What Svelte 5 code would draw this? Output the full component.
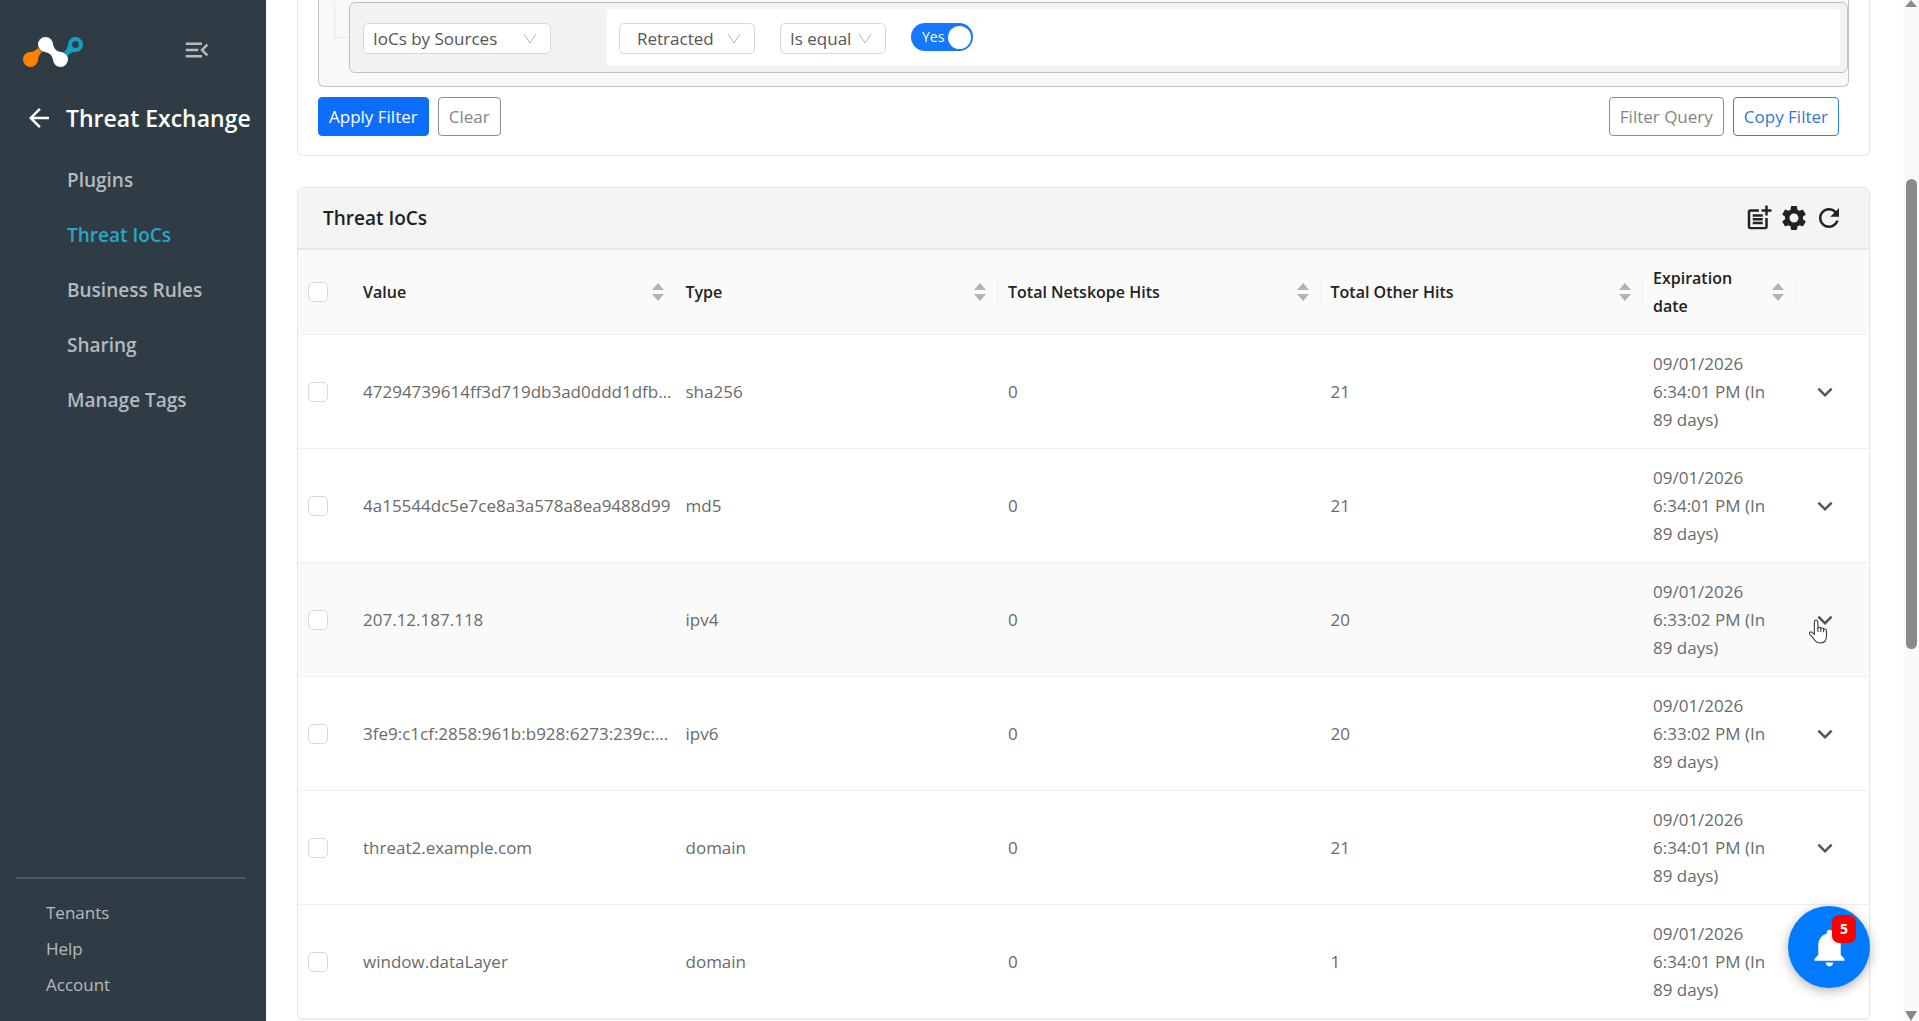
<script>
  const menu = ['Plugins', 'Threat IoCs', 'Business Rules', 'Sharing', 'Manage Tags'];
  const footerLinks = ['Tenants', 'Help', 'Account'];
  const columns = ['Value', 'Type', 'Total Netskope Hits', 'Total Other Hits', 'Expiration date'];

  const rows = [
    { value: '47294739614ff3d719db3ad0ddd1dfb...', type: 'sha256', netskope: 0, other: 21, time: '6:34:01' },
    { value: '4a15544dc5e7ce8a3a578a8ea9488d99', type: 'md5', netskope: 0, other: 21, time: '6:34:01' },
    { value: '207.12.187.118', type: 'ipv4', netskope: 0, other: 20, time: '6:33:02' },
    { value: '3fe9:c1cf:2858:961b:b928:6273:239c:...', type: 'ipv6', netskope: 0, other: 20, time: '6:33:02' },
    { value: 'threat2.example.com', type: 'domain', netskope: 0, other: 21, time: '6:34:01' },
    { value: 'window.dataLayer', type: 'domain', netskope: 0, other: 1, time: '6:34:01' }
  ];

  let active = $state('Threat IoCs');
  let hovered = $state(2);
  let retracted = $state(true);
</script>

{#snippet caret()}
  <svg class="caret" viewBox="0 0 14 12" aria-hidden="true"><path d="M1 1l6 9 6-9" /></svg>
{/snippet}

<div class="app">
  <aside class="sidebar">
    <div class="brand">
      <svg class="logo" viewBox="0 0 60 30" aria-label="Netskope">
        <path d="M3 16.500Q12 15 15 11L19 15Q15 18 14.500 25z" fill="#ff8200" />
        <circle cx="7.500" cy="22.500" r="7.500" fill="#ff8200" />
        <path d="M54 14Q47 15 45 19L41 15Q45 12 45.500 5z" fill="#159fc1" />
        <circle cx="52.500" cy="7.500" r="5.500" fill="#2f3c45" stroke="#159fc1" stroke-width="4" />
        <path d="M30 7Q31 14 38 15L30 23Q29 16 22 15z" fill="#fff" />
        <circle cx="22.500" cy="7.500" r="7.500" fill="#fff" />
        <circle cx="37.500" cy="22.500" r="7.500" fill="#fff" />
      </svg>
      <button class="icon-btn collapse" aria-label="Collapse menu">
        <svg viewBox="0 0 24 24"><path d="M3 18h13v-2H3v2zm0-5h10v-2H3v2zm0-7v2h13V6H3zm18 9.590L17.420 12 21 8.410 19.590 7l-5 5 5 5L21 15.590z" /></svg>
      </button>
    </div>
    <div class="section">
      <button class="icon-btn back" aria-label="Back">
        <svg viewBox="0 0 24 24"><path d="M20 11H7.830l5.590-5.590L12 4l-8 8 8 8 1.410-1.410L7.830 13H20v-2z" /></svg>
      </button>
      <h1>Threat Exchange</h1>
    </div>
    <nav class="menu">
      {#each menu as item}
        <a href="#top" class:active={item === active} onclick={() => (active = item)}>{item}</a>
      {/each}
    </nav>
    <div class="footer">
      {#each footerLinks as item}
        <a href="#top">{item}</a>
      {/each}
    </div>
  </aside>

  <main class="content">
    <section class="card filter-card">
      <div class="query">
        <div class="branch"></div>
        <div class="group">
          <div class="source">
            <div class="select wide">
              <select aria-label="Source"><option>IoCs by Sources</option></select>
              {@render caret()}
            </div>
          </div>
          <div class="rule">
            <div class="select field">
              <select aria-label="Field"><option>Retracted</option></select>
              {@render caret()}
            </div>
            <div class="select operator">
              <select aria-label="Operator"><option>Is equal</option></select>
              {@render caret()}
            </div>
            <label class="switch">
              <input type="checkbox" bind:checked={retracted} />
              <span class="state">{retracted ? 'Yes' : 'No'}</span>
              <span class="knob"></span>
            </label>
          </div>
        </div>
      </div>
      <div class="actions">
        <button class="btn primary">Apply Filter</button>
        <button class="btn">Clear</button>
        <span class="spacer"></span>
        <button class="btn">Filter Query</button>
        <button class="btn outline">Copy Filter</button>
      </div>
    </section>

    <section class="card table-card">
      <header class="card-header">
        <h2>Threat IoCs</h2>
        <div class="tools">
          <button class="icon-btn" aria-label="Add IoC">
            <svg viewBox="0 0 24 24"><path d="M17 19.220H5V7h7V5H5c-1.100 0-2 .9-2 2v12c0 1.100.9 2 2 2h12c1.100 0 2-.9 2-2v-7h-2v7.220zM19 2h-2v3h-3v2h3v3h2V7h3V5h-3V2zM7 9h8v2H7zM7 12h8v2H7zM7 15h8v2H7z" /></svg>
          </button>
          <button class="icon-btn" aria-label="Settings">
            <svg viewBox="0 0 24 24"><path d="M19.140 12.940c.04-.3.06-.61.06-.94 0-.32-.02-.64-.07-.94l2.030-1.580c.18-.14.23-.41.12-.61l-1.920-3.320c-.12-.22-.37-.29-.59-.22l-2.390.96c-.5-.38-1.030-.7-1.620-.94l-.36-2.540c-.04-.24-.24-.41-.48-.41h-3.840c-.24 0-.43.17-.47.41l-.36 2.540c-.59.24-1.130.57-1.620.94l-2.390-.96c-.22-.08-.47 0-.59.22L2.740 8.870c-.12.21-.08.47.12.61l2.030 1.580c-.05.3-.09.63-.09.94s.02.64.07.94l-2.030 1.580c-.18.14-.23.41-.12.61l1.920 3.320c.12.22.37.29.59.22l2.390-.96c.5.38 1.030.7 1.620.94l.36 2.540c.05.24.24.41.48.41h3.840c.24 0 .44-.17.47-.41l.36-2.540c.59-.24 1.130-.56 1.620-.94l2.390.96c.22.08.47 0 .59-.22l1.920-3.320c.12-.22.07-.47-.12-.61l-2.010-1.580zM12 15.600c-1.980 0-3.600-1.620-3.600-3.600s1.620-3.600 3.600-3.600 3.600 1.620 3.600 3.600-1.620 3.600-3.600 3.600z" /></svg>
          </button>
          <button class="icon-btn" aria-label="Refresh">
            <svg viewBox="0 0 24 24"><path d="M17.650 6.350C16.200 4.900 14.210 4 12 4c-4.420 0-7.990 3.580-7.990 8s3.570 8 7.990 8c3.730 0 6.840-2.550 7.730-6h-2.080c-.82 2.330-3.040 4-5.650 4-3.310 0-6-2.690-6-6s2.690-6 6-6c1.660 0 3.140.69 4.220 1.780L13 11h7V4l-2.350 2.350z" /></svg>
          </button>
        </div>
      </header>
      <table>
        <colgroup>
          <col class="col-check" />
          <col /><col /><col /><col />
          <col class="col-date" />
          <col class="col-expand" />
        </colgroup>
        <thead>
          <tr>
            <th class="check"><input type="checkbox" aria-label="Select all" /></th>
            {#each columns as column, i}
              <th class:divided={i > 0}>
                <div class="head">
                  <span>{column}</span>
                  <svg class="sorter" viewBox="0 0 12 18" aria-hidden="true"><path d="M6 0l6 7H0zM6 18l6-7H0z" /></svg>
                </div>
              </th>
            {/each}
            <th></th>
          </tr>
        </thead>
        <tbody>
          {#each rows as row, i}
            <tr class:hovered={i === hovered} onmouseenter={() => (hovered = i)}>
              <td class="check"><input type="checkbox" aria-label={`Select ${row.value}`} /></td>
              <td class="value">{row.value}</td>
              <td>{row.type}</td>
              <td>{row.netskope}</td>
              <td>{row.other}</td>
              <td class="date">09/01/2026<br />{row.time} PM (In<br />89 days)</td>
              <td class="expand">
                <button class="icon-btn" aria-label="Expand row">
                  <svg viewBox="0 0 24 24"><path d="M16.590 8.590 12 13.170 7.410 8.590 6 10l6 6 6-6z" /></svg>
                </button>
                {#if i === 2}
                  <svg class="pointer" viewBox="0 0 18 24" aria-hidden="true">
                    <path d="M5.500 14.500V3c0-2.600 3.400-2.600 3.400 0v5.500c.8-1 2.600-.7 2.800.5.900-.8 2.500-.4 2.700.8 1.300-.6 2.700.1 2.700 1.600v5c0 4-2.300 6.600-6 6.600-3.200 0-4.700-1.300-6-3.700L1 14.400c-.9-1.700 1.200-2.700 2.300-1.500z" />
                    <path d="M8.900 8.500v4M11.700 9v3.500M14.400 9.800v3" />
                  </svg>
                {/if}
              </td>
            </tr>
          {/each}
        </tbody>
      </table>
    </section>
  </main>

  <div class="scrollbar" aria-hidden="true">
    <span class="arrow up"></span>
    <span class="thumb"></span>
    <span class="arrow down"></span>
  </div>

  <button class="bell" aria-label="Notifications">
    <svg viewBox="0 0 24 24"><path d="M12 22c1.100 0 2-.9 2-2h-4c0 1.100.89 2 2 2zm6-6v-5c0-3.070-1.640-5.640-4.500-6.320V4c0-.83-.67-1.500-1.500-1.500s-1.500.67-1.500 1.500v.68C7.630 5.360 6 7.920 6 11v5l-2 2v1h16v-1l-2-2z" /></svg>
    <span class="badge">5</span>
  </button>
</div>

<style>
  :global(body) {
    margin: 0;
    overflow: hidden;
  }

  .app {
    position: relative;
    display: flex;
    height: 100vh;
    overflow: hidden;
    background: #fff;
    color: #6a6a6a;
    font: 17px/28px 'Open Sans', 'Noto Sans', sans-serif;
  }
  .app * {
    box-sizing: border-box;
  }

  button,
  select {
    font: inherit;
    color: inherit;
    cursor: pointer;
  }
  a {
    color: inherit;
    text-decoration: none;
  }

  .icon-btn {
    display: flex;
    padding: 0;
    border: 0;
    background: none;
  }
  .icon-btn svg {
    width: 30px;
    height: 30px;
    fill: currentColor;
  }

  /* sidebar */
  .sidebar {
    display: flex;
    flex-direction: column;
    flex: 0 0 266px;
    background: #2f3c45;
    color: #b4babf;
  }
  .brand {
    display: flex;
    align-items: center;
    justify-content: space-between;
    padding: 33px 54px 0 23px;
  }
  .logo {
    width: 60px;
    height: 30px;
    margin-top: 4px;
  }
  .section {
    display: flex;
    align-items: center;
    gap: 12px;
    padding: 33px 0 0 24px;
    color: #fff;
  }
  h1 {
    margin: 0;
    font-size: 23px;
    font-weight: 600;
    line-height: 36px;
    white-space: nowrap;
  }
  .menu {
    display: flex;
    flex-direction: column;
    gap: 27px;
    padding: 30px 0 0 67px;
    font-size: 19px;
    font-weight: 600;
  }
  .menu .active {
    color: #25a8c4;
  }
  .footer {
    display: flex;
    flex-direction: column;
    gap: 8px;
    margin: auto 20px 0 16px;
    padding: 20px 0 22px 30px;
    border-top: 2px solid #4a5a64;
  }

  /* filter card */
  .content {
    flex: 1;
    min-width: 0;
    padding: 0 33px 0 31px;
  }
  .card {
    border: 1px solid #e4e6e8;
    border-radius: 6px;
  }
  .filter-card {
    padding: 0 20px 19px;
    border-top: 0;
    border-radius: 0 0 6px 6px;
  }
  .query {
    display: flex;
    padding: 2px 0 13px 15px;
    border: 1px solid #c4c4c4;
    border-top: 0;
    border-radius: 0 0 6px 6px;
    background: #f9f9f9;
  }
  .branch {
    width: 15px;
    height: 36px;
    border: solid #e8e8e8;
    border-width: 0 0 1px 1px;
  }
  .group {
    display: flex;
    flex: 1;
    padding: 6px 7px;
    border: 1px solid #c0c0c0;
    border-radius: 6px;
    background: #f2f2f2;
  }
  .source {
    flex: 0 0 250px;
    padding: 14px 6px 12px;
  }
  .rule {
    display: flex;
    flex: 1;
    gap: 25px;
    padding: 14px 12px 12px;
    border-radius: 4px;
    background: #fff;
  }
  .select {
    position: relative;
    height: 31px;
  }
  .select select {
    width: 100%;
    height: 100%;
    padding: 0 9px;
    border: 1px solid #d9d9d9;
    border-radius: 5px;
    background: #fff;
    color: #555;
    appearance: none;
  }
  .wide {
    width: 188px;
  }
  .field {
    width: 136px;
  }
  .field select {
    padding-left: 17px;
  }
  .operator {
    width: 106px;
  }
  .caret {
    position: absolute;
    top: 10px;
    right: 14px;
    width: 14px;
    height: 12px;
    fill: none;
    stroke: #b8b8b8;
    pointer-events: none;
  }

  .switch {
    position: relative;
    width: 62px;
    height: 28px;
    color: #fff;
    font-size: 14px;
  }
  .switch input {
    display: block;
    width: 100%;
    height: 100%;
    margin: 0;
    border-radius: 14px;
    background: #1677ff;
    appearance: none;
  }
  .switch input:not(:checked) {
    background: #bfbfbf;
  }
  .state {
    position: absolute;
    top: 0;
    left: 11px;
  }
  .knob {
    position: absolute;
    top: 3px;
    right: 2px;
    width: 23px;
    height: 23px;
    border-radius: 50%;
    background: #fff;
  }

  .actions {
    display: flex;
    gap: 9px;
    padding: 10px 10px 0 0;
  }
  .spacer {
    flex: 1;
  }
  .btn {
    height: 39px;
    padding: 0 10px;
    border: 1px solid #8c8c8c;
    border-radius: 4px;
    background: #fff;
    color: #858585;
  }
  .primary {
    border-color: #0d6efd;
    background: #0d6efd;
    color: #fff;
  }
  .outline {
    border-color: #2f80e0;
    color: #3277d5;
  }

  /* table card */
  .table-card {
    margin-top: 31px;
  }
  .card-header {
    display: flex;
    align-items: center;
    justify-content: space-between;
    height: 62px;
    padding: 0 25px;
    border-bottom: 2px solid #e6e7e8;
    border-radius: 6px 6px 0 0;
    background: #f4f4f4;
    color: #222;
  }
  h2 {
    margin: 0;
    font-size: 19px;
    font-weight: 600;
    line-height: 28px;
  }
  .tools {
    display: flex;
    gap: 5px;
  }
  table {
    width: 100%;
    border-collapse: separate;
    border-spacing: 0;
    table-layout: fixed;
  }
  .col-check {
    width: 55px;
  }
  .col-date {
    width: 153px;
  }
  .col-expand {
    width: 73px;
  }
  th,
  td {
    padding: 0 10px;
    border-bottom: 1px solid #efefef;
    text-align: left;
    white-space: nowrap;
  }
  th {
    position: relative;
    height: 85px;
    background: #fafafa;
    color: #222;
    font-size: 16px;
    font-weight: 600;
    white-space: normal;
  }
  .divided::after {
    content: '';
    position: absolute;
    top: 28px;
    right: 0;
    width: 1px;
    height: 28px;
    background: #f0f0f0;
  }
  td {
    height: 114px;
  }
  .value {
    padding-right: 0;
  }
  .hovered td {
    background: #fafafa;
  }
  .head {
    display: flex;
    align-items: center;
    justify-content: space-between;
    gap: 16px;
    padding-right: 2px;
  }
  .sorter {
    flex: none;
    width: 12px;
    height: 18px;
    fill: #b3b3b3;
  }
  .check input {
    display: block;
    width: 20px;
    height: 20px;
    margin: 0;
    border: 1px solid #d9d9d9;
    border-radius: 5px;
    background: #fff;
    appearance: none;
  }
  .check input:checked {
    background: #1677ff;
  }
  .expand {
    position: relative;
    padding-left: 14px;
    color: #555;
  }
  .pointer {
    position: absolute;
    top: 56px;
    left: 12px;
    width: 20px;
    height: 25px;
    fill: #fff;
    stroke: #333;
  }

  /* scrollbar */
  .scrollbar {
    display: flex;
    flex: 0 0 16px;
    flex-direction: column;
    align-items: center;
    background: #fafafa;
  }
  .arrow {
    border: solid transparent;
    border-width: 0 6px;
  }
  .up {
    border-bottom: 7px solid #8a8a8a;
  }
  .down {
    margin-top: auto;
    border-top: 10px solid #8a8a8a;
  }
  .thumb {
    width: 11px;
    height: 46%;
    margin-top: 172px;
    border-radius: 6px;
    background: #8a8a8a;
  }

  .bell {
    position: absolute;
    right: 49px;
    bottom: 33px;
    display: flex;
    align-items: center;
    justify-content: center;
    width: 82px;
    height: 82px;
    padding: 0;
    border: 0;
    border-radius: 50%;
    background: #007bff;
    box-shadow: 0 3px 12px rgba(0, 0, 0, 0.3);
  }
  .bell svg {
    width: 45px;
    height: 45px;
    fill: #fff;
  }
  .badge {
    position: absolute;
    top: 9px;
    right: 14px;
    width: 24px;
    border-radius: 7px;
    background: #f00;
    color: #fff;
    font-size: 14px;
    font-weight: 700;
  }
</style>
